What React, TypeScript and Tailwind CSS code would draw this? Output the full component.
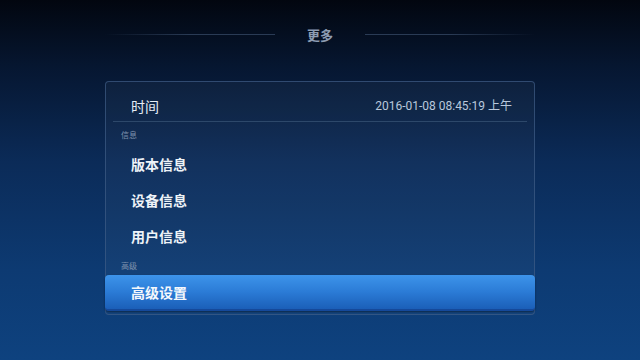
import React from "react";

const cjk = { fontFamily: '"Noto Sans CJK SC", "Noto Sans", sans-serif' };

const rows = ["版本信息", "设备信息", "用户信息"];

const App = () => {
  return (
    <div
      className="w-[640px] h-[360px] overflow-hidden bg-[linear-gradient(180deg,#02060f_0%,#061630_18%,#0b2b58_45%,#0d3a72_75%,#0e427f_100%)] flex flex-col items-center"
      style={cjk}
    >
      {/* title */}
      <div className="w-[430px] mt-[25px] h-[18px] flex items-center">
        <div className="flex-1 h-px bg-gradient-to-r from-transparent via-[#2a3b55] to-[#2a3b55]" />
        <p className="w-[90px] text-center text-[13px] font-bold leading-none text-[#8d9cb2]">更多</p>
        <div className="flex-1 h-px bg-gradient-to-l from-transparent via-[#2a3b55] to-[#2a3b55]" />
      </div>

      {/* panel */}
      <div className="mt-[38px] w-[430px] rounded-[4px] border border-[#3e5c86]/70 bg-[#ffffff]/[0.03] flex flex-col pb-[3px]">
        <div className="h-[39px] flex items-center justify-between pl-[25px] pr-[22px] pt-[9px]">
          <span className="text-[14px] text-[#e6edf5]">时间</span>
          <span
            className="text-[12px] text-[#b9c8dc]"
            style={{ fontFamily: 'Roboto, "Noto Sans CJK SC", sans-serif' }}
          >
            2016-01-08 08:45:19 上午
          </span>
        </div>
        <div className="mx-[7px] h-px bg-[#3a5578]/70" />
        <div className="h-[24px] flex items-center pl-[15px] pt-[1px]">
          <span className="text-[8px] text-[#7f93ad]">信息</span>
        </div>
        {rows.map((r) => (
          <div key={r} className="h-9 flex items-center pl-[25px]">
            <span className="text-[14px] font-bold text-[#eef3f8]">{r}</span>
          </div>
        ))}
        <div className="h-[21px] flex items-center pl-[15px] pt-[2px]">
          <span className="text-[8px] text-[#7f93ad]">高级</span>
        </div>
        <div className="-mx-px h-9 rounded-[4px] bg-gradient-to-b from-[#3d94ea] via-[#2b7bd6] to-[#1b5fb8] border-b-2 border-[#15499a] shadow-[0_1px_2px_rgba(0,0,0,0.4)] flex items-center pl-[26px]">
          <span className="text-[14px] font-bold text-[#f4f8fc]">高级设置</span>
        </div>
      </div>
    </div>
  );
};

export default App;
